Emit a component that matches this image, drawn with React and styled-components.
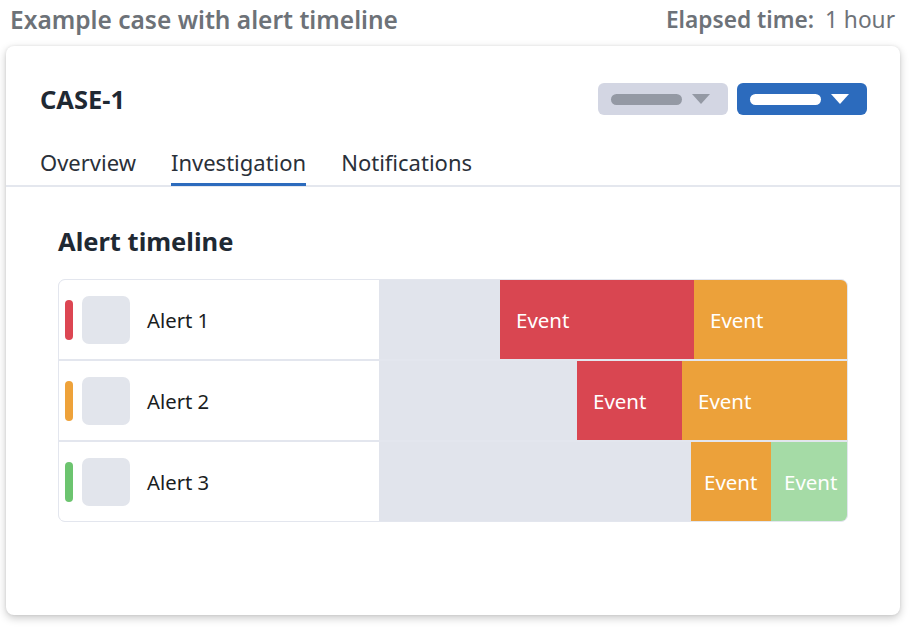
import React from 'react';
import styled, {createGlobalStyle} from "styled-components";

const GlobalStyle = createGlobalStyle`
  body {
    margin: 0;
    background: #ffffff;
    font-family: "Noto Sans", "Open Sans", sans-serif;
  }
`;

const Page = styled.div`
  width: 912px;
  height: 634px;
  box-sizing: border-box;
  padding: 0 12px 0 6px;
`;

const TopBar = styled.div`
  display: flex;
  align-items: center;
  justify-content: space-between;
  height: 38px;
  padding: 0 5px 0 4px;
  color: #6d7278;
`;

const PageTitle = styled.div`
  font-size: 24.5px;
  font-weight: 600;
`;

const Elapsed = styled.div`
  display: flex;
  gap: 11px;
  font-size: 22.7px;
  b {
    font-weight: 600;
  }
`;

const Card = styled.div`
  margin-top: 8px;
  height: 569px;
  background: #fff;
  border-radius: 8px;
  box-shadow: 0 3px 9px rgba(0, 0, 0, 0.22), 0 0 3px rgba(0, 0, 0, 0.08);
  padding-top: 37px;
  box-sizing: border-box;
`;

const CardHeader = styled.div`
  display: flex;
  align-items: center;
  justify-content: space-between;
  height: 32px;
  padding: 0 33px 0 34px;
`;

const CaseTitle = styled.h1`
  margin: 0;
  font-size: 25.5px;
  font-weight: 700;
  color: #1f2933;
`;

const Actions = styled.div`
  display: flex;
  gap: 9px;
`;

const Dropdown = styled.div`
  display: flex;
  align-items: center;
  gap: 10px;
  width: 130px;
  height: 32px;
  box-sizing: border-box;
  padding: 0 18px 0 13px;
  border-radius: 6px;
  background: ${({primary}) => primary ? '#2c6bbd' : '#d3d6e3'};
`;

const Pill = styled.div`
  width: 71px;
  height: 11px;
  border-radius: 6px;
  background: ${({primary}) => primary ? '#ffffff' : '#9499a4'};
`;

const Caret = styled.div`
  width: 0;
  height: 0;
  border-left: 9px solid transparent;
  border-right: 9px solid transparent;
  border-top: 10px solid ${({primary}) => primary ? '#ffffff' : '#9499a4'};
`;

const Tabs = styled.div`
  display: flex;
  gap: 35px;
  margin-top: 32px;
  padding-left: 34px;
  border-bottom: 2px solid #e4e7ee;
`;

const Tab = styled.div`
  font-size: 22px;
  line-height: 30px;
  color: #2a3039;
  padding-bottom: 6px;
  border-bottom: 3px solid ${({active}) => active ? '#2c6bbd' : 'transparent'};
  margin-bottom: -1px;
`;

const Body = styled.div`
  padding: 37px 52px 0 52px;
`;

const SectionTitle = styled.h2`
  margin: 0;
  font-size: 25.5px;
  line-height: 34px;
  font-weight: 700;
  color: #1f2933;
`;

const Table = styled.div`
  margin-top: 21px;
  border: 1px solid #e3e6ee;
  border-radius: 7px;
  overflow: hidden;
  display: flex;
  flex-direction: column;
  gap: 2px;
  background: #e3e6ee;
`;

const Row = styled.div`
  display: grid;
  grid-template-columns: 320px 1fr;
  height: 79px;
`;

const AlertCell = styled.div`
  display: flex;
  align-items: center;
  background: #fff;
  padding-left: 6px;
`;

const Severity = styled.div`
  width: 8px;
  height: 40px;
  border-radius: 4px;
  background: ${({color}) => color};
`;

const Thumb = styled.div`
  width: 48px;
  height: 48px;
  margin-left: 9px;
  border-radius: 7px;
  background: #e2e5ec;
`;

const AlertName = styled.div`
  margin-left: 17px;
  font-size: 20.3px;
  color: #1a1d21;
`;

const Track = styled.div`
  display: flex;
  background: #e1e4ec;
`;

const Event = styled.div`
  display: flex;
  align-items: center;
  padding-left: ${({narrow}) => narrow ? '13px' : '16px'};
  box-sizing: border-box;
  font-size: 20.5px;
  color: #fff;
  white-space: nowrap;
  background: ${({kind}) => ({red: '#d94651', orange: '#eca13a', green: '#a5dba6'})[kind]};
  flex: ${({grow}) => grow ? '1' : 'none'};
`;

const alerts = [
    {name: 'Alert 1', color: '#dc4652', offset: 121, events: [{kind: 'red', width: 194}, {kind: 'orange'}]},
    {name: 'Alert 2', color: '#eea23a', offset: 198, events: [{kind: 'red', width: 105}, {kind: 'orange'}]},
    {name: 'Alert 3', color: '#6cc46f', offset: 312, narrow: true, events: [{kind: 'orange', width: 80}, {kind: 'green'}]},
];

const App = () => {
    return (
        <Page>
            <GlobalStyle/>
            <TopBar>
                <PageTitle>Example case with alert timeline</PageTitle>
                <Elapsed><b>Elapsed time:</b><span>1 hour</span></Elapsed>
            </TopBar>
            <Card>
                <CardHeader>
                    <CaseTitle>CASE-1</CaseTitle>
                    <Actions>
                        <Dropdown><Pill/><Caret/></Dropdown>
                        <Dropdown primary><Pill primary/><Caret primary/></Dropdown>
                    </Actions>
                </CardHeader>
                <Tabs>
                    <Tab>Overview</Tab>
                    <Tab active>Investigation</Tab>
                    <Tab>Notifications</Tab>
                </Tabs>
                <Body>
                    <SectionTitle>Alert timeline</SectionTitle>
                    <Table>
                        {alerts.map(alert => (
                            <Row key={alert.name}>
                                <AlertCell>
                                    <Severity color={alert.color}/>
                                    <Thumb/>
                                    <AlertName>{alert.name}</AlertName>
                                </AlertCell>
                                <Track style={{paddingLeft: alert.offset}}>
                                    {alert.events.map((ev, i) => (
                                        <Event key={i} kind={ev.kind} grow={!ev.width} narrow={alert.narrow}
                                               style={ev.width ? {width: ev.width} : undefined}>
                                            Event
                                        </Event>
                                    ))}
                                </Track>
                            </Row>
                        ))}
                    </Table>
                </Body>
            </Card>
        </Page>
    );
};

export default App;
